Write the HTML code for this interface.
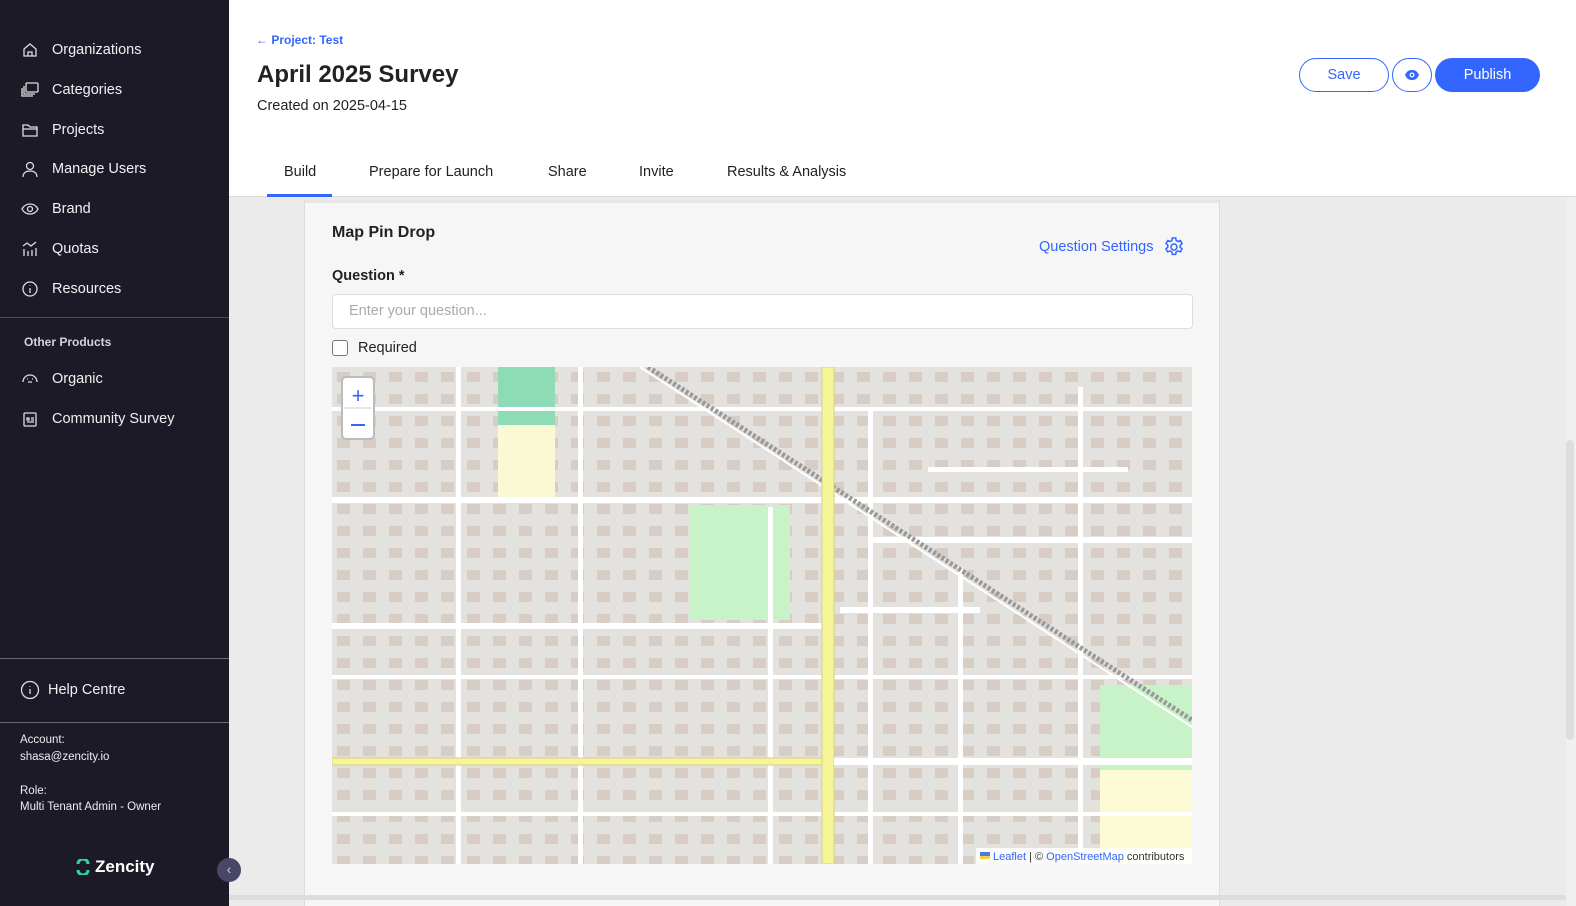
<!DOCTYPE html>
<html><head><meta charset="utf-8"><style>
*{box-sizing:border-box;margin:0;padding:0}
body{width:1576px;height:906px;overflow:hidden;font-family:"Liberation Sans",sans-serif;background:#ebebeb;position:relative}
.sb{position:absolute;left:0;top:0;width:229px;height:906px;background:#1c1a27;color:#f0f0f0}
.it{position:absolute;left:20px;font-size:14.5px;display:flex;align-items:center}
.it svg{width:20px;height:20px;margin-right:12px;fill:none;stroke:#ddd;stroke-width:1.3}
.hr{position:absolute;left:0;width:229px;height:1px;background:#4b4860}
.small{position:absolute;left:20px;font-size:11.5px;color:#eee}
.main{position:absolute;left:229px;top:0;width:1347px;height:197px;background:#fff;border-bottom:1px solid #ddd}
.card{position:absolute;left:304px;top:200px;width:916px;height:706px;background:#f6f6f6;border-left:1px solid #ddd;border-right:1px solid #ddd}
.tab{position:absolute;top:164px;font-size:14.5px;color:#222}
.btn{position:absolute;top:58px;height:34px;border-radius:17px;font-size:14.5px;display:flex;align-items:center;justify-content:center}
</style></head><body>
<div class="sb">
 <div class="it" style="top:40px"><svg viewBox="0 0 20 20"><path d="M4 9l6-5 6 5v7H4z M8 16v-4h4v4"/></svg>Organizations</div>
 <div class="it" style="top:80px"><svg viewBox="0 0 20 20"><rect x="6" y="3" width="12" height="9" rx="1"/><path d="M4 6v8h11 M2 8v8h11"/></svg>Categories</div>
 <div class="it" style="top:120px"><svg viewBox="0 0 20 20"><path d="M3 5h5l2 2h7v9H3z M3 9h14"/></svg>Projects</div>
 <div class="it" style="top:159px"><svg viewBox="0 0 20 20"><circle cx="10" cy="7" r="3.5"/><path d="M3 18c0-4 3-6 7-6s7 2 7 6"/></svg>Manage Users</div>
 <div class="it" style="top:199px"><svg viewBox="0 0 20 20"><path d="M2 10c2-4 5-5 8-5s6 1 8 5c-2 4-5 5-8 5s-6-1-8-5z"/><circle cx="10" cy="10" r="2.5"/></svg>Brand</div>
 <div class="it" style="top:239px"><svg viewBox="0 0 20 20"><path d="M3 7l4-3 4 3 5-4 M4 10v7 M8 12v5 M12 11v6 M16 9v8"/></svg>Quotas</div>
 <div class="it" style="top:279px"><svg viewBox="0 0 20 20"><circle cx="10" cy="10" r="7"/><path d="M10 9v5 M10 6.5v.5"/></svg>Resources</div>
 <div class="hr" style="top:317px"></div>
 <div class="small" style="left:24px;top:335px;font-size:12px;font-weight:bold;color:#d8cfe0">Other Products</div>
 <div class="it" style="top:369px"><svg viewBox="0 0 20 20"><path d="M3 13a7 7 0 0114 0 M7 10h1 M12 10h1 M8 13h4"/></svg>Organic</div>
 <div class="it" style="top:409px"><svg viewBox="0 0 20 20"><rect x="4" y="4" width="12" height="13" rx="1"/><path d="M7 9h2v2H7z M11 9h3 M11 11h3 M7 13h7"/></svg>Community Survey</div>
 <div class="hr" style="top:658px;background:#6a6878"></div>
 <div class="it" style="top:680px"><svg viewBox="0 0 20 20" style="margin-right:8px;width:20px;height:20px"><circle cx="10" cy="10" r="8.5"/><path d="M10 9v5 M10 6v.6"/></svg>Help Centre</div>
 <div class="hr" style="top:722px;background:#6a6878"></div>
 <div class="small" style="top:734px">Account:</div>
 <div class="small" style="top:751px">shasa@zencity.io</div>
 <div class="small" style="top:785px">Role:</div>
 <div class="small" style="top:801px">Multi Tenant Admin - Owner</div>
 <div style="position:absolute;left:76px;top:857px;font-size:17px;font-weight:bold;color:#fff;display:flex;align-items:center"><svg width="14" height="16" viewBox="0 0 14 16" style="margin-right:5px"><path d="M12 5a5 5 0 00-10 0 M2 11a5 5 0 0010 0" stroke="#2fd3b0" stroke-width="3" fill="none"/></svg>Zencity</div>
</div>
<div style="position:absolute;left:217px;top:858px;width:24px;height:24px;border-radius:12px;background:#4a4766;color:#ccc;font-size:14px;text-align:center;line-height:23px">‹</div>
<div class="main">
 <div style="position:absolute;left:27px;top:33px;font-size:12px;color:#3366ff;font-weight:bold">← Project: Test</div>
 <div style="position:absolute;left:28px;top:61px;font-size:24px;font-weight:bold;color:#222">April 2025 Survey</div>
 <div style="position:absolute;left:28px;top:98px;font-size:14.5px;color:#222">Created on 2025-04-15</div>
 <div class="tab" style="left:55px">Build</div>
 <div style="position:absolute;left:38px;top:194px;width:65px;height:3px;background:#3366ff"></div>
 <div class="tab" style="left:140px">Prepare for Launch</div>
 <div class="tab" style="left:319px">Share</div>
 <div class="tab" style="left:410px">Invite</div>
 <div class="tab" style="left:498px">Results &amp; Analysis</div>
 <div class="btn" style="left:1070px;width:90px;border:1px solid #3366ff;color:#3366ff">Save</div>
 <div class="btn" style="left:1163px;width:40px;border:1px solid #3366ff"><svg width="16" height="12" viewBox="0 0 16 12"><path d="M1 6c2-4 4-5 7-5s5 1 7 5c-2 4-4 5-7 5s-5-1-7-5z" fill="#3366ff"/><circle cx="8" cy="6" r="2.5" fill="#fff"/><circle cx="8" cy="6" r="1.3" fill="#3366ff"/></svg></div>
 <div class="btn" style="left:1206px;width:105px;background:#3366ff;color:#fff">Publish</div>
</div>
<div style="position:absolute;left:1220px;top:198px;width:346px;height:700px;background:#ebebeb"></div>
<div style="position:absolute;left:1566px;top:198px;width:10px;height:708px;background:#f0f0f0"></div>
<div style="position:absolute;left:1566px;top:440px;width:8px;height:300px;background:#ddd;border-radius:4px"></div>
<div class="card">
 <div style="position:absolute;left:0;top:0;width:914px;height:3px;background:#e6e6e6"></div>
 <div style="position:absolute;left:27px;top:24px;font-size:16px;font-weight:bold;color:#222">Map Pin Drop</div>
 <div style="position:absolute;left:734px;top:35px;font-size:14.5px;color:#3366ff;display:flex;align-items:center">Question Settings<svg width="24" height="24" viewBox="0 0 24 24" style="margin-left:9px" fill="none" stroke="#3366ff" stroke-width="1.5"><path d="M10.3 3h3.4l.5 2.5 1.8 1 2.4-.9 1.7 2.9-1.9 1.7v2l1.9 1.7-1.7 2.9-2.4-.9-1.8 1-.5 2.5h-3.4l-.5-2.5-1.8-1-2.4.9-1.7-2.9 1.9-1.7v-2L4 8.5l1.7-2.9 2.4.9 1.8-1z"/><circle cx="12" cy="12" r="3"/></svg></div>
 <div style="position:absolute;left:27px;top:68px;font-size:14.5px;font-weight:bold;color:#222">Question *</div>
 <div style="position:absolute;left:27px;top:94px;width:861px;height:35px;background:#fff;border:1px solid #ddd;border-radius:4px;font-size:14.5px;color:#aaa;padding:8px 16px">Enter your question...</div>
 <div style="position:absolute;left:27px;top:140px;width:16px;height:16px;border:1.5px solid #777;border-radius:3px;background:#fff"></div>
 <div style="position:absolute;left:53px;top:140px;font-size:14.5px;color:#222">Required</div>
</div>
<svg style="position:absolute;left:332px;top:367px" width="860" height="497" viewBox="0 0 860 497">
 <defs><pattern id="b" width="26" height="22" patternUnits="userSpaceOnUse"><rect width="26" height="22" fill="#e4e2df"/><rect x="5" y="5" width="13" height="10" fill="#d8cdc5"/></pattern></defs>
 <rect width="860" height="497" fill="url(#b)"/>
 <rect x="166" y="0" width="57" height="58" fill="#8ddcb6"/>
 <rect x="166" y="58" width="57" height="72" fill="#fbf8d4"/>
 <rect x="358" y="138" width="100" height="115" fill="#c8f2c8"/>
 <rect x="768" y="318" width="92" height="85" fill="#c8f2c8"/>
 <rect x="768" y="403" width="92" height="94" fill="#fdfad6"/>
 <g fill="#fff">
  <rect x="0" y="130" width="860" height="6"/><rect x="540" y="170" width="320" height="6"/>
  <rect x="0" y="256" width="496" height="6"/><rect x="508" y="240" width="140" height="6"/>
  <rect x="0" y="308" width="860" height="4"/><rect x="0" y="445" width="860" height="4"/>
  <rect x="124" y="0" width="5" height="497"/><rect x="246" y="0" width="5" height="497"/>
  <rect x="436" y="140" width="5" height="357"/><rect x="536" y="40" width="5" height="457"/>
  <rect x="626" y="200" width="5" height="297"/><rect x="746" y="20" width="5" height="477"/>
  <rect x="0" y="40" width="860" height="4"/><rect x="596" y="100" width="200" height="5"/>
 </g>
 <path d="M316 0L860 353" stroke="#999" stroke-width="5" stroke-dasharray="3 2"/>
 <path d="M308 0L860 360" stroke="#fff" stroke-width="2"/>
 <rect x="490" y="0" width="12" height="497" fill="#f6f59a" stroke="#d8cf86"/>
 <rect x="0" y="391" width="490" height="7" fill="#f6f59a" stroke="#d8cf86"/>
 <rect x="502" y="391" width="358" height="7" fill="#fff"/>
 <rect x="10" y="10" width="32" height="62" rx="4" fill="#fff" stroke="#bbb" stroke-width="2"/>
 <line x1="12" y1="41" x2="40" y2="41" stroke="#ccc"/>
 <text x="26" y="36" text-anchor="middle" font-size="22" fill="#3366ff" font-family="Liberation Sans">+</text>
 <rect x="19" y="57" width="14" height="2" fill="#3366ff"/>
 <rect x="644" y="481" width="216" height="16" fill="#fff" opacity=".85"/>
 <rect x="648" y="485" width="10" height="4" fill="#4c7be0"/><rect x="648" y="489" width="10" height="3" fill="#f0d040"/>
 <text x="661" y="493" font-size="11" font-family="Liberation Sans" fill="#3366ff">Leaflet <tspan fill="#333">| ©</tspan> OpenStreetMap <tspan fill="#333">contributors</tspan></text>
</svg>
<div style="position:absolute;left:229px;top:895px;width:1337px;height:5px;background:#ddd"></div>
</body></html>
